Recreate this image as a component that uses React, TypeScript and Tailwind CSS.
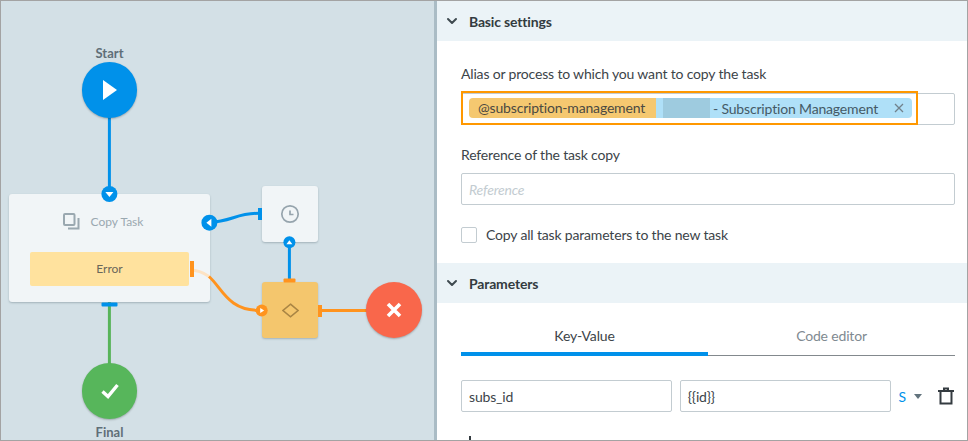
import { ChevronDown } from 'lucide-react';

const font = "font-['Lato','Noto_Sans',sans-serif]";

const SectionHeader = ({ title }: { title: string }) => (
  <div className="flex items-center h-10 bg-[#ebf3f7] pl-[7px] gap-[9px]">
    <ChevronDown size={16} strokeWidth={3} className="text-[#3f4a50]" />
    <span className="font-bold text-[14px] text-[#333b40]">{title}</span>
  </div>
);

const Diagram = () => (
  <div className="relative w-[433px] shrink-0 bg-[#d3e0e6]">
    <svg className="absolute inset-0" width="433" height="439" fill="none">
      <path d="M108.4 89V190" stroke="#0091ea" strokeWidth="3" />
      <path d="M108.4 300V365" stroke="#57b45a" strokeWidth="3" />
      <path d="M208 221.5C231 220.5 235 212.3 258 212.3" stroke="#0091ea" strokeWidth="3" />
      <path d="M288.4 242V282" stroke="#0091ea" strokeWidth="3" />
      <path d="M318 309.4H370" stroke="#ff931e" strokeWidth="3" />
    </svg>

    <p className="absolute left-[60px] w-[97px] top-[43px] text-center text-[13px] font-bold text-[#5f6f78]">Start</p>
    <div className="absolute left-[81px] top-[61px] w-[55px] h-14 rounded-full bg-[#0091ea] shadow-[0_1px_2px_rgba(0,0,0,0.25)] flex items-center justify-center">
      <svg width="16" height="22" viewBox="0 0 16 22"><path d="M1 1L15 11L1 21Z" fill="#fff" /></svg>
    </div>

    <div className="absolute left-[8px] top-[193px] w-[201px] h-[108px] rounded-[3px] bg-[#f1f5f7] shadow-[0_1px_2px_rgba(90,110,120,0.4)]">
      <div className="flex items-center justify-center gap-[11px] h-[58px] pr-[13px] pb-[3px]">
        <svg width="17" height="17" viewBox="0 0 17 17" fill="none" stroke="#9aa8b0" strokeWidth="2">
          <rect x="1" y="1" width="10.5" height="11" rx="1" />
          <path d="M15.5 5V15.5H5" />
        </svg>
        <span className="text-[12px] text-[#9aa8b0]">Copy Task</span>
      </div>
      <div className="ml-[21px] w-[159px] h-[34px] rounded-[2px] bg-[#ffe29e] flex items-center justify-center text-[12px] text-[#6a675a]">
        Error
      </div>
    </div>

    <div className="absolute left-[261px] top-[185px] w-14 h-14 rounded-[3px] bg-[#f1f5f7] shadow-[0_1px_2px_rgba(90,110,120,0.4)] flex items-center justify-center">
      <svg width="20" height="20" viewBox="0 0 20 20" fill="none" stroke="#96a4ad" strokeWidth="1.7">
        <circle cx="10" cy="10" r="8.2" />
        <path d="M10 6.5V10.5H13.5" />
      </svg>
    </div>

    <div className="absolute left-[261px] top-[281px] w-14 h-14 rounded-[3px] bg-[#f4c66d] shadow-[0_1px_2px_rgba(90,110,120,0.4)] flex items-center justify-center">
      <svg width="17" height="15" viewBox="0 0 17 15" fill="none" stroke="#a98544" strokeWidth="1.6">
        <path d="M8.5 1.2L16 7.5L8.5 13.8L1 7.5Z" />
      </svg>
    </div>

    <svg className="absolute inset-0" width="433" height="439" fill="none">
      <path d="M189 269C197 269 203 272 208 275.5" stroke="#fde3c4" strokeWidth="3" />
      <path d="M208 275.5C221 287 227 309.4 258 309.4" stroke="#ff931e" strokeWidth="3" />
      <rect x="189" y="260" width="4" height="16" fill="#ff931e" />
      <rect x="282.5" y="277.5" width="12" height="4" rx="1" fill="#ff931e" />
      <rect x="317" y="304" width="4" height="12" fill="#ff931e" />
      <rect x="257" y="207" width="4" height="12" fill="#0091ea" />
      <rect x="100.5" y="301.5" width="16" height="4" rx="1" fill="#0091ea" />
      <circle cx="108.4" cy="193" r="8" fill="#0091ea" />
      <path d="M104.4 191H112.4L108.4 196Z" fill="#fff" />
      <circle cx="208.4" cy="221.7" r="8" fill="#0091ea" />
      <path d="M210.4 217.7V225.7L205.4 221.7Z" fill="#fff" />
      <circle cx="288.4" cy="241.3" r="6" fill="#0091ea" />
      <path d="M285.4 243.3H291.4L288.4 239.3Z" fill="#fff" />
      <circle cx="260.7" cy="309.4" r="6" fill="#ff931e" />
      <path d="M259.2 306.9V311.9L263.2 309.4Z" fill="#fff" />
    </svg>

    <div className="absolute left-[365px] top-[281px] w-14 h-14 rounded-full bg-[#f9674b] shadow-[0_1px_2px_rgba(0,0,0,0.25)] flex items-center justify-center">
      <svg width="16" height="16" viewBox="0 0 16 16" stroke="#fff" strokeWidth="3.6"><path d="M2 2L14 14M14 2L2 14" /></svg>
    </div>

    <div className="absolute left-[81px] top-[362px] w-[55px] h-14 rounded-full bg-[#57b65b] shadow-[0_1px_2px_rgba(0,0,0,0.25)] flex items-center justify-center">
      <svg width="18" height="16" viewBox="0 0 18 16" fill="none" stroke="#fff" strokeWidth="3.4"><path d="M1.5 8.5L7 13.5L16.5 2" /></svg>
    </div>
    <p className="absolute left-[60px] w-[97px] top-[422px] text-center text-[13px] font-bold text-[#5f6f78]">Final</p>
  </div>
);

const SettingsPanel = () => (
  <div className="flex-1 min-w-0 bg-white text-[14px] tracking-[-0.17px] text-[#3c4449]">
    <SectionHeader title="Basic settings" />
    <div className="pl-6 pr-3 h-[222px] pt-6">
      <p className="leading-[18px]">Alias or process to which you want to copy the task</p>
      <div className="relative mt-[10px] h-8 border border-[#c3ccd1] rounded-[2px] w-[494px]">
        <div className="absolute -left-px -top-[3px] w-[457px] h-[34px] border-2 border-[#ff9800] flex items-center pl-[6px]">
          <div className="flex items-center h-5 w-[443px] rounded-[4px] overflow-hidden">
            <span className="h-full w-[187px] bg-[#f5c870] pl-[9px] leading-5 text-[#4b4a42]">@subscription-management</span>
            <span className="flex-1 h-full bg-[#afe0f8] flex items-center pl-[7px] text-[#455a66]">
              <span className="w-[47px] h-5 bg-[#9ecbdf]" />
              <span className="ml-[3px] flex-1">- Subscription Management</span>
              <svg className="mr-2" width="10" height="10" viewBox="0 0 10 10" stroke="#71818b" strokeWidth="1.3"><path d="M1 1L9 9M9 1L1 9" /></svg>
            </span>
          </div>
        </div>
      </div>
      <p className="mt-[21px] leading-[18px]">Reference of the task copy</p>
      <div className="mt-[9px] h-8 w-[494px] border border-[#c3ccd1] rounded-[2px] flex items-center pl-[7px] italic text-[#c3ccd1]">
        Reference
      </div>
      <label className="mt-[19px] flex items-center gap-[9px]">
        <span className="w-4 h-4 border border-[#c3ccd1] rounded-[2px]" />
        <span>Copy all task parameters to the new task</span>
      </label>
    </div>
    <SectionHeader title="Parameters" />
    <div className="pl-6 pr-3 pt-[22px]">
      <div className="flex w-[494px] text-center leading-[22px]">
        <div className="w-1/2 h-[27px] border-b-4 border-[#0091ea] box-content">Key-Value</div>
        <div className="w-1/2 h-[30px] border-b border-[#83898d] box-content text-[#7f8a91]">Code editor</div>
      </div>
      <div className="flex items-center gap-2 mt-6">
        <div className="w-[211px] h-8 border border-[#c3ccd1] rounded-[2px] flex items-center pl-[7px]">subs_id</div>
        <div className="w-[211px] h-8 border border-[#c3ccd1] rounded-[2px] flex items-center pl-[7px]">{'{{id}}'}</div>
        <span className="text-[#0091ea]">S</span>
        <span className="w-0 h-0 border-x-4 border-x-transparent border-t-[5px] border-t-[#62737d]" />
        <svg className="ml-[7px]" width="18" height="18" viewBox="0 0 18 18" fill="none" stroke="#343b40" strokeWidth="2">
          <path d="M1 4H17M7 4V1.5H11V4M3.5 4V16.5H14.5V4" />
        </svg>
      </div>
      <div className="mt-[23px] flex items-start gap-3 pl-[3px]">
        <svg className="mt-px shrink-0" width="12" height="12" viewBox="0 0 12 12" stroke="#343b40" strokeWidth="2">
          <path d="M6 0V12M0 6H12" />
        </svg>
        <span className="leading-5">Add Key-Value</span>
      </div>
    </div>
  </div>
);

export default function App() {
  return (
    <div className={`w-[968px] h-[441px] overflow-hidden border border-[#a3a3a3] flex ${font}`}>
      <Diagram />
      <div className="w-[3px] shrink-0 bg-[#aabcc5]" />
      <SettingsPanel />
    </div>
  );
}
